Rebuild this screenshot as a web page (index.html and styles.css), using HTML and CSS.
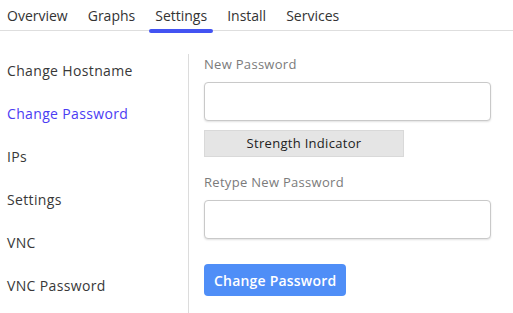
FILE: index.html
```html
<!DOCTYPE html>
<html>
<head>
<meta charset="utf-8">
<link rel="stylesheet" href="styles.css">
</head>
<body>
<nav class="tabs">
  <a class="tab">Overview</a>
  <a class="tab">Graphs</a>
  <a class="tab active">Settings</a>
  <a class="tab">Install</a>
  <a class="tab">Services</a>
</nav>
<div class="main">
  <ul class="side">
    <li>Change Hostname</li>
    <li class="current">Change Password</li>
    <li>IPs</li>
    <li>Settings</li>
    <li>VNC</li>
    <li>VNC Password</li>
  </ul>
  <form class="form">
    <label class="label">New Password</label>
    <input class="input" type="password">
    <div class="strength">Strength Indicator</div>
    <label class="label label2">Retype New Password</label>
    <input class="input" type="password">
    <button class="btn" type="button">Change Password</button>
  </form>
</div>
</body>
</html>
```
FILE: styles.css
```css
* { box-sizing: border-box; }
html, body { margin: 0; padding: 0; background: #fff; }
body {
  font-family: "Open Sans", "Noto Sans", sans-serif;
  color: #333;
  width: 513px;
  height: 313px;
  overflow: hidden;
}
.tabs {
  display: flex;
  height: 31px;
  border-bottom: 1px solid #dedede;
  padding-left: 1px;
}
.tab {
  position: relative;
  padding: 6px 6px 0;
  margin-right: 8px;
  font-size: 14px;
  line-height: 19px;
  color: #333;
}
.tab.active::after {
  content: "";
  position: absolute;
  left: 0;
  right: 0;
  bottom: -3px;
  height: 4px;
  border-radius: 2px;
  background: #4353f2;
}
.main {
  display: flex;
  margin-top: 23px;
}
.side {
  list-style: none;
  margin: 0;
  padding: 7px 0 0 7px;
  width: 189px;
  height: 259px;
  border-right: 1px solid #dcdcdc;
}
.side li {
  font-size: 14px;
  line-height: 20px;
  height: 43px;
  color: #383838;
  letter-spacing: 0.35px;
}
.side li.current { color: #4b3cf3; }
.form {
  display: flex;
  flex-direction: column;
  align-items: flex-start;
  padding-left: 15px;
  margin: 0;
}
.label {
  font-size: 13px;
  line-height: 20px;
  margin-top: 0;
  color: #7b7b7b;
  letter-spacing: 0.3px;
}
.label2 { margin-top: 15px; }
.input {
  margin-top: 8px;
  width: 287px;
  height: 39px;
  border: 1px solid #c9c9c9;
  border-radius: 4px;
  box-shadow: 0 1px 2px rgba(0,0,0,0.12);
  background: #fff;
}
.strength {
  margin-top: 9px;
  width: 200px;
  height: 27px;
  background: #e5e5e5;
  border: 1px solid #d9d9d9;
  font-size: 13px;
  line-height: 25px;
  text-align: center;
  color: #222;
  letter-spacing: 0.3px;
}
.btn {
  margin-top: 25px;
  height: 32px;
  padding: 0 10px;
  background: #4f8ef7;
  color: #fff;
  border: none;
  border-radius: 4px;
  font-family: "Open Sans", "Noto Sans", sans-serif;
  font-size: 14px;
  font-weight: 600;
  letter-spacing: 0.2px;
}
```
